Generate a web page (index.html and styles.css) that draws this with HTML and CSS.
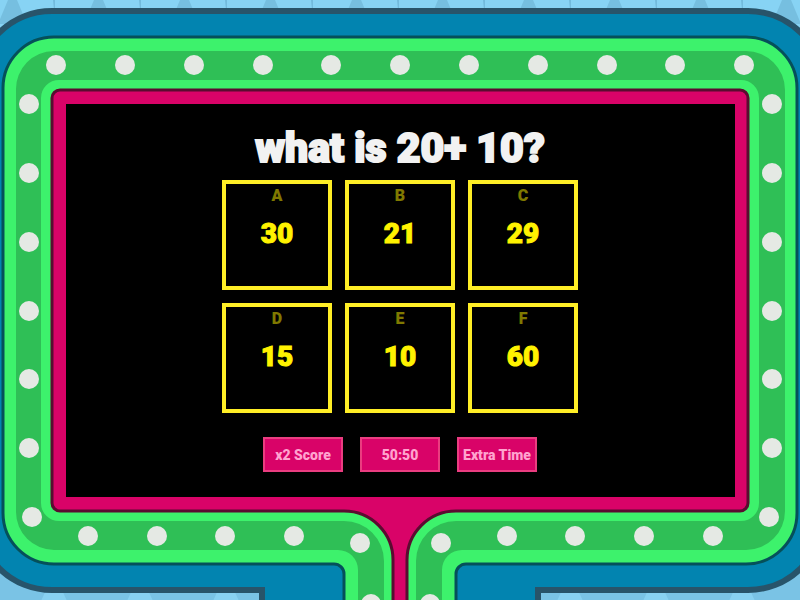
FILE: index.html
```html
<!DOCTYPE html>
<html lang="en">
<head>
  <meta charset="UTF-8">
  <title>Gameshow quiz</title>
  <meta name="viewport" content="width=device-width, initial-scale=1">
  <link rel="stylesheet" href="styles.css">
</head>
<body>
  <div class="stage">
    <svg class="board" viewBox="0 0 800 600" preserveAspectRatio="xMidYMid slice" aria-hidden="true">
      <defs>
        <pattern id="peaks-top" width="86" height="32" patternUnits="userSpaceOnUse" x="55">
          <rect width="86" height="32" fill="#87d3f4"/>
          <path d="M39 0H48L58 24H29Z" fill="#76bfe0"/>
          <path d="M84 0H86V10H85Z" fill="#72bbdd"/>
        </pattern>
        <pattern id="peaks-bottom" width="86" height="20" patternUnits="userSpaceOnUse" x="11" y="590">
          <rect width="86" height="20" fill="#7ac3e5"/>
          <path d="M26 20L35 0H51L60 20Z" fill="#88d1f1"/>
        </pattern>
      </defs>
      <rect width="800" height="300" fill="url(#peaks-top)"/>
      <rect y="300" width="800" height="300" fill="url(#peaks-bottom)"/>

      <!-- blue cabinet -->
      <path class="cabinet" d="M52 11H748A75 75 0 0 1 823 86V515A75 75 0 0 1 748 590H538V610H262V590H52A75 75 0 0 1 -23 515V86A75 75 0 0 1 52 11Z"/>

      <!-- green light tube, outside in -->
      <path class="tube-outer" d="M54 37H746A51 51 0 0 1 797 88V513A51 51 0 0 1 746 564H466A10 10 0 0 0 456 574V610H344V574A10 10 0 0 0 334 564H54A51 51 0 0 1 3 513V88A51 51 0 0 1 54 37Z"/>
      <path class="tube-mid" d="M54 51H746A39 39 0 0 1 785 90V511A39 39 0 0 1 746 550H462A20 20 0 0 0 442 570V610H358V570A20 20 0 0 0 338 550H54A38 38 0 0 1 16 512V90A38 38 0 0 1 54 51Z"/>
      <path class="tube-inner" d="M59 80H741A18 18 0 0 1 759 98V503A18 18 0 0 1 741 521H456A40 40 0 0 0 416 561V610H384V561A40 40 0 0 0 344 521H59A18 18 0 0 1 41 503V98A18 18 0 0 1 59 80Z"/>
      <path class="panel" d="M60 90H740A8 8 0 0 1 748 98V503A8 8 0 0 1 740 511H456A49 49 0 0 0 407 560V610H393V560A49 49 0 0 0 344 511H60A8 8 0 0 1 52 503V98A8 8 0 0 1 60 90Z"/>
      <rect x="66" y="104" width="669" height="393"/>

      <g class="bulbs">
        <circle cx="56" cy="65" r="10"/><circle cx="125" cy="65" r="10"/><circle cx="194" cy="65" r="10"/>
        <circle cx="263" cy="65" r="10"/><circle cx="331" cy="65" r="10"/><circle cx="400" cy="65" r="10"/>
        <circle cx="469" cy="65" r="10"/><circle cx="538" cy="65" r="10"/><circle cx="607" cy="65" r="10"/>
        <circle cx="675" cy="65" r="10"/><circle cx="744" cy="65" r="10"/>

        <circle cx="29" cy="104" r="10"/><circle cx="29" cy="173" r="10"/><circle cx="29" cy="242" r="10"/>
        <circle cx="29" cy="311" r="10"/><circle cx="29" cy="379" r="10"/><circle cx="29" cy="448" r="10"/>
        <circle cx="32" cy="517" r="10"/><circle cx="88" cy="536" r="10"/><circle cx="157" cy="536" r="10"/>
        <circle cx="225" cy="536" r="10"/><circle cx="294" cy="536" r="10"/><circle cx="360" cy="543" r="10"/>
        <circle cx="371" cy="604" r="10"/>

        <circle cx="772" cy="104" r="10"/><circle cx="772" cy="173" r="10"/><circle cx="772" cy="242" r="10"/>
        <circle cx="772" cy="311" r="10"/><circle cx="772" cy="379" r="10"/><circle cx="772" cy="448" r="10"/>
        <circle cx="769" cy="517" r="10"/><circle cx="713" cy="536" r="10"/><circle cx="644" cy="536" r="10"/>
        <circle cx="575" cy="536" r="10"/><circle cx="507" cy="536" r="10"/><circle cx="441" cy="543" r="10"/>
        <circle cx="430" cy="604" r="10"/>
      </g>
    </svg>

    <main class="quiz">
      <h1>what is 20+ 10?</h1>
      <div class="answers">
        <button type="button" class="answer"><span class="letter">A</span><span class="value">30</span></button>
        <button type="button" class="answer"><span class="letter">B</span><span class="value">21</span></button>
        <button type="button" class="answer"><span class="letter">C</span><span class="value">29</span></button>
        <button type="button" class="answer"><span class="letter">D</span><span class="value">15</span></button>
        <button type="button" class="answer"><span class="letter">E</span><span class="value">10</span></button>
        <button type="button" class="answer"><span class="letter">F</span><span class="value">60</span></button>
      </div>
      <div class="lifelines">
        <button type="button" class="lifeline">x2 Score</button>
        <button type="button" class="lifeline">50:50</button>
        <button type="button" class="lifeline">Extra Time</button>
      </div>
    </main>
  </div>
</body>
</html>
```
FILE: styles.css
```css
* { box-sizing: border-box; }
body { margin: 0; background: #87d3f4; font-family: Roboto, "Liberation Sans", sans-serif; font-weight: 900; }

/* board drawing and quiz share one grid cell */
.stage { display: grid; min-height: 100vh; overflow: hidden; }
.board, .quiz { grid-area: 1 / 1; }
.board { width: 100%; height: 100vh; display: block; }

.cabinet { fill: #0284b0; stroke: #28546a; stroke-width: 6; }
.tube-outer { fill: #3df26c; stroke: #05505a; stroke-width: 3; }
.tube-mid { fill: #2fbf56; }
.tube-inner { fill: #3df26c; }
.panel { fill: #d90368; stroke: #5a0c30; stroke-width: 3; }
.bulbs { fill: #e5e9e4; }

.quiz { display: flex; flex-direction: column; align-items: center; justify-content: center; padding-bottom: 4px; }
h1 { margin: 0 0 8px; font-size: 41px; line-height: 48px; font-weight: 900; color: #f2f2f2; text-align: center; -webkit-text-stroke: 2px #f2f2f2; }

.answers { display: grid; grid-template-columns: repeat(3, 110px); gap: 13px; }
.answer { display: flex; flex-direction: column; align-items: center; height: 110px; padding: 2px; background: #000; border: 4px solid #ffee26; color: #fff200; font: inherit; cursor: pointer; }
.letter { font-size: 16px; line-height: 20px; opacity: 0.5; }
.value { margin-top: 10px; font-size: 28px; line-height: 36px; -webkit-text-stroke: 1px #fff200; }

.lifelines { display: flex; gap: 17px; margin-top: 24px; }
.lifeline { width: 80px; height: 35px; padding: 0; background: #d90368; border: 2px solid #ea3d80; color: #ffa3cf; font: inherit; font-size: 14px; white-space: nowrap; cursor: pointer; }
.answer:hover, .lifeline:hover { filter: brightness(1.2); }
```
